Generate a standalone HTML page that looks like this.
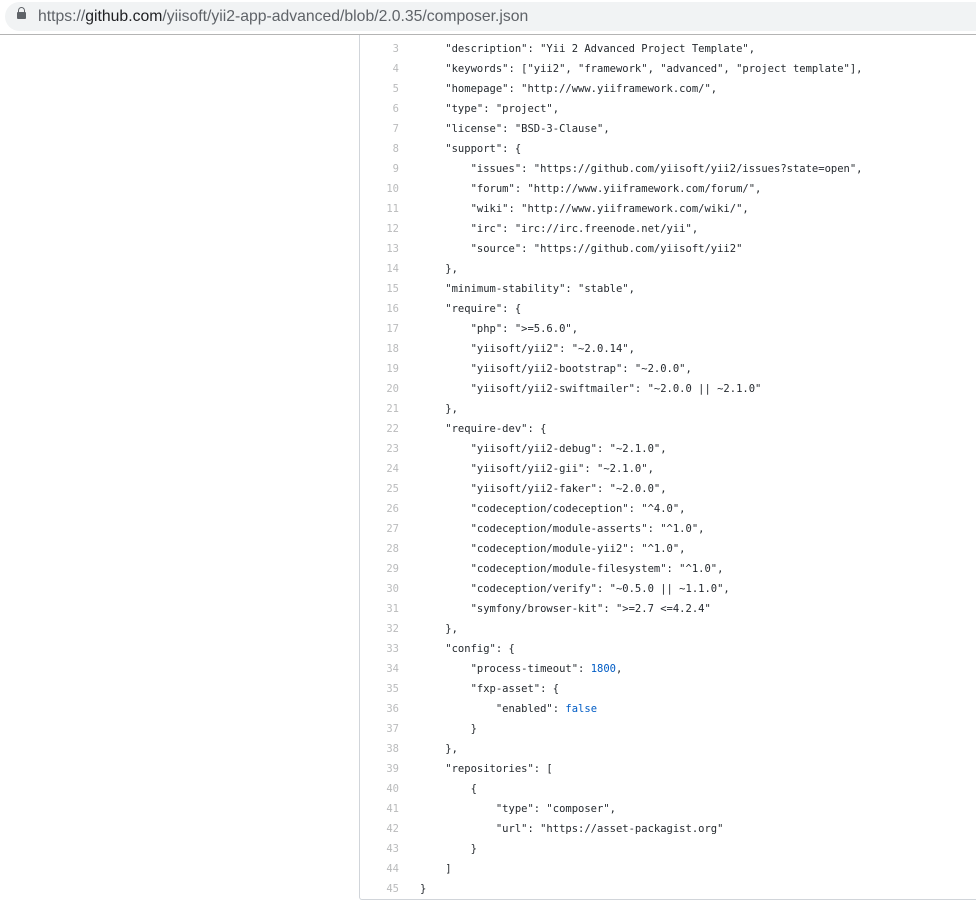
<!DOCTYPE html>
<html><head><meta charset="utf-8"><style>
html,body{margin:0;padding:0;background:#fff;width:976px;height:917px;overflow:hidden;}
.bar{position:absolute;left:0;top:0;width:976px;height:34px;background:#fff;border-bottom:1px solid #b4b4b4;}
.pill{position:absolute;left:5px;top:2px;width:1000px;height:29px;background:#f1f3f4;border-radius:15px;}
.lock{position:absolute;left:17px;top:12px;width:9px;height:7px;background:#5f6368;border-radius:1px;}
.lock:before{content:"";position:absolute;left:1px;top:-5px;width:5px;height:5px;border:1.5px solid #5f6368;border-bottom:none;border-radius:4px 4px 0 0;}
.url{position:absolute;left:38px;top:8px;font:15.75px "Liberation Sans",sans-serif;color:#5f6368;white-space:nowrap;}
.url b{font-weight:normal;color:#202124;}
.box{position:absolute;left:359px;top:35px;width:640px;height:864px;border:1px solid #d1d5da;border-top:none;border-radius:0 0 3px 3px;}
.code{position:absolute;left:359px;top:39px;font:10.5px/20px "DejaVu Sans Mono",monospace;color:#24292e;white-space:pre;}
.ln{display:inline-block;width:40px;text-align:right;color:#babbbc;margin-right:21px;}
.c{color:#005cc5}
</style></head><body>
<div class="bar"><div class="pill"></div><div class="lock"></div><div class="url">https://<b>github.com</b>/yiisoft/yii2-app-advanced/blob/2.0.35/composer.json</div></div>
<div class="box"></div>
<div class="code"><span class="ln">3</span>    "description": "Yii 2 Advanced Project Template",
<span class="ln">4</span>    "keywords": ["yii2", "framework", "advanced", "project template"],
<span class="ln">5</span>    "homepage": "http://www.yiiframework.com/",
<span class="ln">6</span>    "type": "project",
<span class="ln">7</span>    "license": "BSD-3-Clause",
<span class="ln">8</span>    "support": {
<span class="ln">9</span>        "issues": "https://github.com/yiisoft/yii2/issues?state=open",
<span class="ln">10</span>        "forum": "http://www.yiiframework.com/forum/",
<span class="ln">11</span>        "wiki": "http://www.yiiframework.com/wiki/",
<span class="ln">12</span>        "irc": "irc://irc.freenode.net/yii",
<span class="ln">13</span>        "source": "https://github.com/yiisoft/yii2"
<span class="ln">14</span>    },
<span class="ln">15</span>    "minimum-stability": "stable",
<span class="ln">16</span>    "require": {
<span class="ln">17</span>        "php": ">=5.6.0",
<span class="ln">18</span>        "yiisoft/yii2": "~2.0.14",
<span class="ln">19</span>        "yiisoft/yii2-bootstrap": "~2.0.0",
<span class="ln">20</span>        "yiisoft/yii2-swiftmailer": "~2.0.0 || ~2.1.0"
<span class="ln">21</span>    },
<span class="ln">22</span>    "require-dev": {
<span class="ln">23</span>        "yiisoft/yii2-debug": "~2.1.0",
<span class="ln">24</span>        "yiisoft/yii2-gii": "~2.1.0",
<span class="ln">25</span>        "yiisoft/yii2-faker": "~2.0.0",
<span class="ln">26</span>        "codeception/codeception": "^4.0",
<span class="ln">27</span>        "codeception/module-asserts": "^1.0",
<span class="ln">28</span>        "codeception/module-yii2": "^1.0",
<span class="ln">29</span>        "codeception/module-filesystem": "^1.0",
<span class="ln">30</span>        "codeception/verify": "~0.5.0 || ~1.1.0",
<span class="ln">31</span>        "symfony/browser-kit": ">=2.7 <=4.2.4"
<span class="ln">32</span>    },
<span class="ln">33</span>    "config": {
<span class="ln">34</span>        "process-timeout": <span class="c">1800</span>,
<span class="ln">35</span>        "fxp-asset": {
<span class="ln">36</span>            "enabled": <span class="c">false</span>
<span class="ln">37</span>        }
<span class="ln">38</span>    },
<span class="ln">39</span>    "repositories": [
<span class="ln">40</span>        {
<span class="ln">41</span>            "type": "composer",
<span class="ln">42</span>            "url": "https://asset-packagist.org"
<span class="ln">43</span>        }
<span class="ln">44</span>    ]
<span class="ln">45</span>}</div>
</body></html>
